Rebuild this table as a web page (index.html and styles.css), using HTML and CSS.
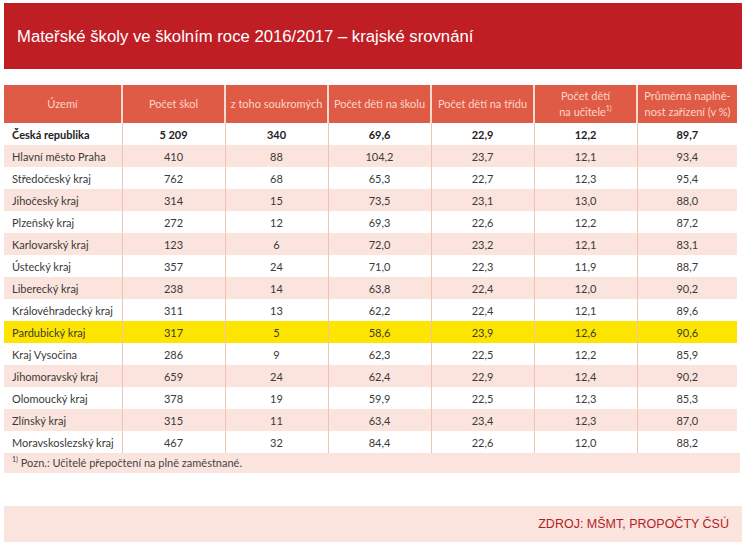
FILE: index.html
```html
<!DOCTYPE html>
<html lang="cs">
<head>
<meta charset="utf-8">
<title>Mateřské školy</title>
<link rel="stylesheet" href="styles.css">
</head>
<body>
<div class="page">
  <header class="title-bar">
    <h1>Mateřské školy ve školním roce 2016/2017 – krajské srovnání</h1>
  </header>
  <table class="data">
    <colgroup>
      <col class="c-name"><col class="c-n"><col class="c-n"><col class="c-n"><col class="c-n"><col class="c-n"><col class="c-last">
    </colgroup>
    <thead>
      <tr>
        <th>Území</th>
        <th>Počet škol</th>
        <th>z toho soukromých</th>
        <th>Počet dětí na školu</th>
        <th>Počet dětí na třídu</th>
        <th>Počet dětí<br>na učitele<sup>1)</sup></th>
        <th>Průměrná naplně-<br>nost zařízení (v %)</th>
      </tr>
    </thead>
    <tbody>
      <tr class="total"><td>Česká republika</td><td>5 209</td><td>340</td><td>69,6</td><td>22,9</td><td>12,2</td><td>89,7</td></tr>
      <tr class="alt"><td>Hlavní město Praha</td><td>410</td><td>88</td><td>104,2</td><td>23,7</td><td>12,1</td><td>93,4</td></tr>
      <tr><td>Středočeský kraj</td><td>762</td><td>68</td><td>65,3</td><td>22,7</td><td>12,3</td><td>95,4</td></tr>
      <tr class="alt"><td>Jihočeský kraj</td><td>314</td><td>15</td><td>73,5</td><td>23,1</td><td>13,0</td><td>88,0</td></tr>
      <tr><td>Plzeňský kraj</td><td>272</td><td>12</td><td>69,3</td><td>22,6</td><td>12,2</td><td>87,2</td></tr>
      <tr class="alt"><td>Karlovarský kraj</td><td>123</td><td>6</td><td>72,0</td><td>23,2</td><td>12,1</td><td>83,1</td></tr>
      <tr><td>Ústecký kraj</td><td>357</td><td>24</td><td>71,0</td><td>22,3</td><td>11,9</td><td>88,7</td></tr>
      <tr class="alt"><td>Liberecký kraj</td><td>238</td><td>14</td><td>63,8</td><td>22,4</td><td>12,0</td><td>90,2</td></tr>
      <tr><td>Královéhradecký kraj</td><td>311</td><td>13</td><td>62,2</td><td>22,4</td><td>12,1</td><td>89,6</td></tr>
      <tr class="hl"><td>Pardubický kraj</td><td>317</td><td>5</td><td>58,6</td><td>23,9</td><td>12,6</td><td>90,6</td></tr>
      <tr><td>Kraj Vysočina</td><td>286</td><td>9</td><td>62,3</td><td>22,5</td><td>12,2</td><td>85,9</td></tr>
      <tr class="alt"><td>Jihomoravský kraj</td><td>659</td><td>24</td><td>62,4</td><td>22,9</td><td>12,4</td><td>90,2</td></tr>
      <tr><td>Olomoucký kraj</td><td>378</td><td>19</td><td>59,9</td><td>22,5</td><td>12,3</td><td>85,3</td></tr>
      <tr class="alt"><td>Zlínský kraj</td><td>315</td><td>11</td><td>63,4</td><td>23,4</td><td>12,3</td><td>87,0</td></tr>
      <tr><td>Moravskoslezský kraj</td><td>467</td><td>32</td><td>84,4</td><td>22,6</td><td>12,0</td><td>88,2</td></tr>
    </tbody>
  </table>
  <p class="note"><sup>1)</sup> Pozn.: Učitelé přepočtení na plně zaměstnané.</p>
  <footer class="source">ZDROJ: MŠMT, PROPOČTY ČSÚ</footer>
</div>
</body>
</html>
```
FILE: styles.css
```css
html, body {
  margin: 0;
  padding: 0;
  background: #ffffff;
}

.page {
  padding: 3px 4px 0 4px;
  width: 738px;
  font-family: "Lato", "Open Sans", sans-serif;
}

.title-bar {
  background: #bf1e25;
  height: 66px;
  display: flex;
  align-items: center;
  padding: 0 13px;
}

.title-bar h1 {
  margin: 0;
  font-family: "Liberation Sans", Arial, sans-serif;
  font-weight: normal;
  font-size: 16.7px;
  color: #ffffff;
  position: relative;
  top: 1px;
}

.data {
  margin-top: 16px;
  width: 733px;
  border-collapse: collapse;
  table-layout: fixed;
  font-size: 11px;
  color: #3a3a3a;
}

.c-name { width: 118px; }
.c-n { width: 103px; }
.c-last { width: 100px; }

.data th {
  background: #e05b45;
  color: #fcd6c8;
  font-weight: normal;
  font-size: 11px;
  line-height: 16px;
  height: 38px;
  padding: 0 2px;
  border-left: 2px solid #f8dcd2;
  text-align: center;
}

.data th:first-child { border-left: none; }

.data sup {
  font-size: 7px;
  line-height: 0;
}

.data td {
  height: 22px;
  padding: 0;
  text-align: center;
  border-left: 1px solid #f1c3b5;
}

.data td:first-child {
  text-align: left;
  padding-left: 8px;
  border-left: none;
}

.data tr.total td {
  font-weight: bold;
  color: #222;
}

.data tr.alt td { background: #fbe4dd; }

.data tr.hl td { background: #fde500; }

.note {
  margin: 0;
  width: 728px;
  height: 20px;
  line-height: 20px;
  padding-left: 8px;
  background: #fbe4dd;
  font-size: 11px;
  color: #444;
}

.note sup {
  font-size: 7px;
  line-height: 0;
}

.source {
  margin-top: 33px;
  height: 36px;
  background: #fbe4dd;
  display: flex;
  align-items: center;
  justify-content: flex-end;
  padding-right: 13px;
  font-family: "Liberation Sans", Arial, sans-serif;
  font-size: 12.5px;
  color: #b51c25;
}
```
